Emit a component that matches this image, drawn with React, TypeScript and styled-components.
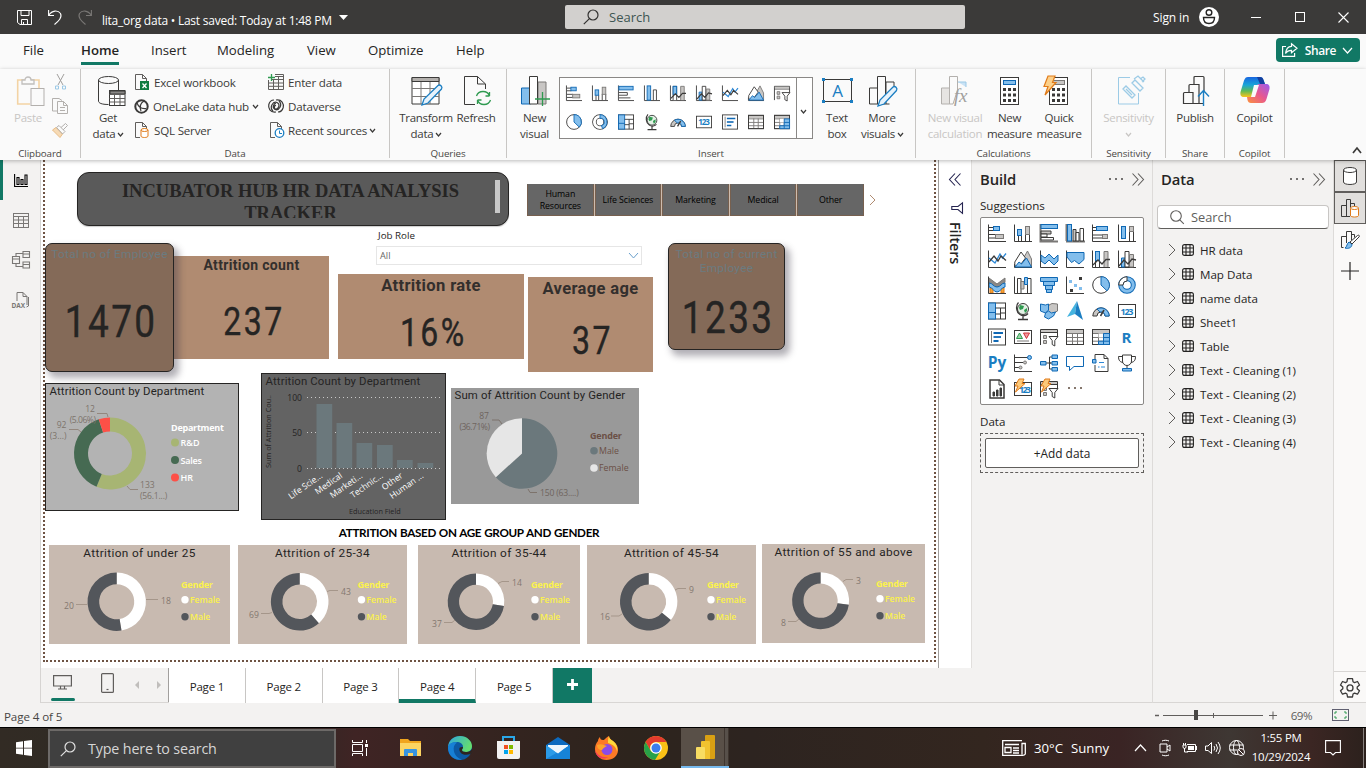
import React from "react";
import styled, { createGlobalStyle, css } from "styled-components";

const GlobalStyle = createGlobalStyle`
  * { box-sizing: border-box; }
  html, body { margin: 0; padding: 0; }
  body {
    width: 1366px; height: 768px; overflow: hidden;
    font-family: "Open Sans", "Noto Sans", sans-serif;
    font-size: 11.4px; color: #3b3a39; background: #f3f2f1;
  }
  svg { display: block; flex: none; overflow: visible; }
`;

const DARK = "#3b3a39";
const GREY = "#7a7876";
const GFILL = "#c8c6c4";
const BLUE = "#0f68b4";
const BFILL = "#83beec";
const TEAL = "#117865";
const GREEN = "#2f9a50";
const ORANGE = "#e07b1a";

/* ---------- visual type icons ---------- */

const Axes = () => <path d="M.5 .5V17.5H18" stroke={DARK} />;
const Table = ({ head = GFILL }: { head?: string }) => (
  <>
    <rect x=".5" y="1.5" width="17" height="15" fill="#fff" stroke={DARK} />
    <path d="M1 2h16v3H1z" fill={head} />
    <path d="M1 5.5h16M1 9.5h16M1 13.2h16M6.5 5v11M11.5 5v11" stroke={GREY} />
    <rect x=".5" y="1.5" width="17" height="15" stroke={DARK} />
  </>
);
const Bolt = () => <path d="M5 -1h5L8 3.5h3L1.5 12 4 6H1z" fill="#fcc97a" stroke={ORANGE} />;
const Filter = () => (
  <>
    <path d="M.5 17V1.5h17V8M.5 4.5h17" stroke={DARK} />
    <path d="M1 2h16v2H1z" fill={GFILL} />
    <path d="M3.5 7.5h3v3h-3zM3.5 12.5h3v3h-3z" fill={GFILL} stroke={GREY} />
    <path d="M9 8.5h9l-3.2 4V18l-2.6-1.5v-4z" fill="#fff" stroke={DARK} />
  </>
);

const drawings: Record<string, React.ReactNode> = {
  stackedBar: (<><Axes /><path d="M1 3.5h5M1 6.5h5M1 10.5h7M1 14h7" stroke={DARK} /><rect x="5.500" y="2.500" width="6" height="4" fill={BFILL} stroke={BLUE} /><rect x="7.500" y="10.500" width="8" height="4" fill={GFILL} stroke={GREY} /></>),
  stackedCol: (<><Axes /><path d="M4.500 17v-6M7.500 17v-6M11.500 17v-7M15.500 17v-7" stroke={DARK} /><rect x="3.500" y="5.500" width="4" height="6" fill={BFILL} stroke={BLUE} /><rect x="11.500" y="2.500" width="4" height="8" fill={GFILL} stroke={GREY} /></>),
  bar: (<><Axes /><rect x="1" y="1.500" width="16" height="4" fill={BFILL} stroke={BLUE} /><path d="M1 8.500h9.500v3H1M1 14.500h13" stroke={DARK} /></>),
  col: (<><Axes /><rect x="3.500" y="1" width="4" height="16" fill={BFILL} stroke={BLUE} /><path d="M10.500 17V5.500h3.500V17" stroke={DARK} /></>),
  clusterBar: (<><path d="M-.5 17.500H18M.5 0v17" stroke={GREY} strokeWidth="2" /><rect x="1" y=".500" width="16.500" height="4" fill={BFILL} stroke={BLUE} /><path d="M1 7h10v3H1z" fill={GFILL} stroke={DARK} /><path d="M1 10h6v3H1zM1 13.500h12.500V16H1z" fill="#fff" stroke={DARK} /></>),
  clusterCol: (<><path d="M0 17.500H19M.5 0v17" stroke={GREY} strokeWidth="2" /><rect x="1.500" y=".500" width="4" height="16.500" fill={BFILL} stroke={BLUE} /><path d="M7 5.500h3V17H7z" fill={GFILL} stroke={DARK} /><path d="M10 8.500h3V17h-3zM14 4.500h3.500V17H14z" fill="#fff" stroke={DARK} /></>),
  fullBar: (<><Axes /><path d="M1 3.500h4M1 6.500h4M1 11h10M1 14h10" stroke={DARK} /><rect x="4.500" y="2.500" width="11" height="4" fill={BFILL} stroke={BLUE} /><rect x="10.500" y="10.500" width="5" height="4" fill={GFILL} stroke={GREY} /></>),
  fullCol: (<><Axes /><rect x="3.500" y="2.500" width="4" height="12" fill={BFILL} stroke={BLUE} /><path d="M11.500 17V8M15.500 17V8" stroke={DARK} /><rect x="11.500" y="2.500" width="4" height="5" fill={GFILL} stroke={GREY} /></>),
  line: (<><Axes /><path d="M1 8l6 5 5-9 2.500 4L18 3.500" stroke="#2b88d8" strokeWidth="1.300" /><path d="M1 12l5-6 4 5 3-5 5 4.500" stroke={DARK} strokeWidth="1.300" /></>),
  area: (<><path d="M.5 14V17.500H18" stroke={DARK} /><path d="M9 9l4.500-8L17.500 9v8z" fill={GFILL} stroke={GREY} /><path d="M.8 12L7 2l4.500 6-6 8H.8z" fill="#fff" stroke={DARK} /><path d="M1 17l4-5 2.500 2L12.500 8l5 9z" fill={BFILL} stroke={BLUE} /></>),
  stackedArea: (<><path d="M.5 .500V17.500H18" stroke={DARK} /><path d="M1 5l4 3 4-4 5 5 4-4v6l-4 4-5-5-4 4-4-3z" fill={BFILL} stroke={BLUE} /></>),
  fullArea: (<><Axes /><path d="M1 2.500h17v7l-5 4.500-4.500-3.500-3 2L1 7z" fill={BFILL} stroke={BLUE} /></>),
  lineStacked: (<><Axes /><path d="M3.500 17V1.500h4V17" fill="#fff" stroke={DARK} /><rect x="3.500" y="1.500" width="4" height="9" fill={BFILL} stroke={BLUE} /><path d="M12 17V1.500h4V17" fill={GFILL} stroke={GREY} /><path d="M1 15l5-5 4 4 4-4.500h4" stroke={DARK} strokeWidth="1.300" /></>),
  lineCluster: (<><Axes /><path d="M3.500 8h3.500v9H3.500z" fill={BFILL} stroke={BLUE} /><path d="M7 1.500h4V17H7z" fill="#fff" stroke={DARK} /><path d="M11.500 4.500h4V17h-4z" fill={GFILL} stroke={GREY} /><path d="M1 16l5-6 4 4 4-5 4 1" stroke={DARK} strokeWidth="1.300" /></>),
  ribbon: (<><path d="M2 12h3v5H2zM13 12h3v5h-3z" fill="#f4a536" stroke={ORANGE} /><path d="M1 2l8 6 8-6v4.500l-8 5-8-5z" fill="#8a8886" stroke={GREY} /><path d="M1 7c4 0 4 4 8 4s4-4 8-4v4c-4 0-4 5-8 5s-4-5-8-5z" fill={BFILL} stroke={BLUE} /><Axes /></>),
  waterfall: (<><Axes /><path d="M3.500 17V2.500H7V17M13.500 17V2.500h3.500V17" stroke={DARK} /><path d="M7 5.500h3V13H7z" fill={GFILL} stroke={GREY} /><path d="M10.500 1.500h3v7h-3z" fill={BFILL} stroke={BLUE} /></>),
  funnel: (<g fill={BFILL} stroke={BLUE}><path d="M.5 1.500h17v4H.5zM3.500 5.500h11v4h-11zM5.500 9.500h7v4h-7zM6.500 13.500h5v3h-5z" /></g>),
  scatter: (<><Axes /><path d="M13 1h3v3h-3zM4 13h3v3H4z" fill={DARK} /><path d="M3 4h3v3H3zM8 8h3v3H8zM13 11h3v3h-3z" fill={BFILL} /></>),
  pie: (<><circle cx="9" cy="9" r="8.300" fill="#fff" stroke={DARK} /><path d="M9 .700V9l6 5.800A8.300 8.300 0 0 0 9 .700z" fill={BFILL} stroke={BLUE} /></>),
  donut: (<><circle cx="9" cy="9" r="6.300" stroke={BLUE} strokeWidth="5" /><circle cx="9" cy="9" r="6.300" stroke={BFILL} strokeWidth="3" /><path d="M9 .700A8.300 8.300 0 0 0 .700 9H5a4 4 0 0 1 4-4z" fill="#fff" stroke={DARK} /></>),
  donutLight: (<><circle cx="9" cy="9" r="6.300" stroke={DARK} strokeWidth="5" /><circle cx="9" cy="9" r="6.300" stroke="#fff" strokeWidth="3.200" /><path d="M9 .700A8.300 8.300 0 0 1 12 16.500L10.500 13A4 4 0 0 0 9 5z" fill={BFILL} stroke={BLUE} /></>),
  treemap: (<><rect x=".500" y="1" width="17" height="16" fill="#fff" stroke={DARK} /><rect x=".500" y="1" width="7" height="16" fill={BFILL} stroke={BLUE} /><path d="M.5 10.500h7" stroke={BLUE} /><path d="M7.500 6h10M12.500 6v11M12.500 11h5M7.500 12h5" stroke={DARK} /></>),
  map: (<><circle cx="9" cy="7" r="5.500" fill="#e3f1e5" stroke={DARK} /><path d="M6 3l4 1-1 3-3 1-1-2zM10 8l3-2v3l-2 2z" fill={GREEN} /><path d="M4.500 .500C1.500 3.500 2 10 6 12.500c3 2 6.500 1 8-1M9 14v3M4 17.500h10" stroke={DARK} strokeWidth="1.300" /></>),
  filled: (<><path d="M9 3l3-1.500 5.500.5v7l-4 2-5 1-3-2 2-3z" fill={GFILL} stroke={GREY} /><path d="M.5 2l5 1 3-1v6l-3 3-5-2z" fill={BFILL} stroke={BLUE} /><path d="M5.500 11l3-2 3 2 4-1-2 4-5 3-4-2z" fill={BFILL} stroke={BLUE} /></>),
  azure: (<><path d="M11 -1L1 15l8-3z" fill="#45b4e0" /><path d="M11 -1L17 18l-8-6z" fill="#1b7ec2" /></>),
  gauge: (<><path d="M.8 14A8.200 8.200 0 0 1 17.200 14H13a4 4 0 0 0-8 0z" fill={GFILL} stroke={DARK} /><path d="M5 7a8.200 8.200 0 0 1 12.200 7H13a4 4 0 0 0-5-4z" fill={BFILL} stroke={BLUE} /><path d="M8.500 14L12 8" stroke={DARK} strokeWidth="1.500" /></>),
  card: (<><rect x=".500" y="2.500" width="17" height="13" fill="#fff" stroke={DARK} /><text x="9" y="12.600" fontSize="9" fontWeight="700" fill="#1b7ec2" textAnchor="middle" fontFamily="Open Sans" textLength="13">123</text></>),
  multiRow: (<><rect x=".500" y="1" width="17" height="16" fill="#fff" stroke={DARK} /><path d="M3.500 3v12" stroke={GREY} /><path d="M5.500 5H15M5.500 13h5" stroke={BLUE} strokeWidth="1.800" /><path d="M5.500 9H13" stroke={BLUE} strokeWidth="1.800" /></>),
  kpi: (<><rect x=".500" y="2.500" width="17" height="13" fill="#fff" stroke={DARK} /><path d="M5.500 5l3 5.500h-6z" fill="#9fd3a9" stroke={GREEN} /><path d="M12.500 10.500l3-5.500h-6z" fill="#f19ba1" stroke="#d13438" /><path d="M3 13h12" stroke={GREY} /></>),
  slicer: <Filter />,
  table: <Table />,
  matrix: (<><Table /><path d="M6.500 5.500h5v4h-5z" fill="#fff" /><path d="M11.500 5.500h6v11h-11v-3.300h5z" fill={BFILL} /><path d="M11.500 5.500h6v11h-11v-3.300h5zM11.500 9.500h6M11.500 13.200h6M11.500 13v3.500" stroke={BLUE} /></>),
  r: (<text x="8.500" y="14.500" fontSize="15" fontWeight="700" fill="#1b7ec2" textAnchor="middle">R</text>),
  py: (<text x="9" y="14" fontSize="15.500" fontWeight="700" fill="#1b7ec2" textAnchor="middle">Py</text>),
  influencers: (<><Axes /><path d="M1 3.500h13M1 8.500h8M1 13.500h4" stroke={DARK} /><circle cx="15.500" cy="3.500" r="2" fill={BFILL} stroke={BLUE} /><circle cx="11" cy="8.500" r="1.500" fill={GFILL} stroke={GREY} /><circle cx="6.500" cy="13.500" r="1.500" fill={GFILL} stroke={GREY} /></>),
  tree: (<><path d="M6 9h5M9.500 3v12M9.500 3H12M9.500 15H12M9.500 9H12" stroke={DARK} /><path d="M.5 7.500H6v3.500H.5zM12 1h5.500v3.500H12zM12 7.500h5.500V11H12zM12 13.500h5.500V17H12z" fill={BFILL} stroke={BLUE} /></>),
  qna: <path d="M.5 2.500h17v10H8L3.500 16.500v-4h-3z" fill="#fff" stroke={BLUE} />,
  narrative: (<><path d="M3 5V.500h9L16 4.500v13H3V11" fill="#fff" stroke={DARK} /><path d="M12 .500v4h4" stroke={DARK} /><path d="M0.500 5.500h3.500v3.500H.5z" fill={BFILL} stroke={BLUE} /><path d="M7 8.500h5M6 13h1.500M9 13h4" stroke="#2b88d8" /></>),
  goals: (<><path d="M4.500 1h9v6a4.500 4.500 0 0 1-9 0z" fill="#fff" stroke={DARK} /><path d="M4.500 2.500h-4c0 4 1.500 5.500 4.500 6M13.500 2.500h4c0 4-1.500 5.500-4.500 6M9 11.500V15" stroke={DARK} /><path d="M4.500 17h9v-2.500h-9z" fill={BFILL} stroke={BLUE} /></>),
  paginated: (<><path d="M2 0h9.500L16 4.500V18H2z" fill="#fff" stroke={DARK} strokeWidth="1.500" /><path d="M11 0v5h5" stroke={DARK} /><path d="M5 12h1.500v4H5zM8.500 10H10v6H8.500zM12 8h1.500v8H12z" fill={DARK} stroke={DARK} /></>),
  powerCard: (<><rect x=".500" y="2.500" width="17" height="13" fill="#fff" stroke={DARK} /><text x="11" y="13" fontSize="9" fontWeight="700" fill="#1b7ec2" textAnchor="middle" textLength="12">123</text><Bolt /></>),
  powerFilter: (<><Filter /><Bolt /></>),
  more: (<g fill="#5c4a3c"><circle cx="3" cy="8" r="1" /><circle cx="9" cy="8" r="1" /><circle cx="15" cy="8" r="1" /></g>),
};

const VisualIcon = ({ name, size = 18 }: { name: string; size?: number }) => (
  <svg width={size} height={size} viewBox="0 0 18 18" fill="none">{drawings[name]}</svg>
);

const Chevron = ({ w = 5, h = 3, dir = "down", color = DARK, sw = 1.2 }: { w?: number; h?: number; dir?: "down" | "right" | "up"; color?: string; sw?: number }) => (
  <svg width={w} height={h} viewBox={`0 0 ${w} ${h}`} fill="none" stroke={color} strokeWidth={sw}>
    {dir === "down" && <path d={`M0 0L${w / 2} ${h}L${w} 0`} />}
    {dir === "up" && <path d={`M0 ${h}L${w / 2} 0L${w} ${h}`} />}
    {dir === "right" && <path d={`M0 0L${w} ${h / 2}L0 ${h}`} />}
  </svg>
);

/* ---------- shell ---------- */

const Window = styled.div`
  width: 1366px; height: 768px; display: flex; flex-direction: column; overflow: hidden;
`;

const TitleBar = styled.header`
  height: 34px; flex: none; background: #3b3a39; color: #fff; display: flex; align-items: center;
  padding-left: 17px;
`;
const QuickIcons = styled.div`display: flex; align-items: center; gap: 16px; width: 85px;`;
const DocTitle = styled.div`
  display: flex; align-items: center; gap: 8px; font-size: 12px; letter-spacing: -0.24px; width: 463px; padding-top: 6px; white-space: nowrap;
`;
const TopSearch = styled.div`
  width: 400px; height: 24px; background: #d2d0ce; border-radius: 2px; display: flex; align-items: center;
  gap: 10px; padding-left: 18px; font-size: 13px; color: #3d5552;
`;
const WindowControls = styled.div`
  margin-left: 188px; display: flex; align-items: center; font-size: 12px;
  letter-spacing: -0.1px; white-space: nowrap;
`;
const Control = styled.div<{ $w: number }>`width: ${(p) => p.$w}px; display: flex; justify-content: center;`;

const MenuBar = styled.nav`
  height: 35px; flex: none; background: #fafafa; display: flex; padding-left: 23px;
`;
const MenuItem = styled.div<{ $w: number; $active?: boolean }>`
  width: ${(p) => p.$w}px; font-size: 13.2px; line-height: 33px; color: #252423; white-space: nowrap;
  ${(p) => p.$active && css`font-weight: 600; span { display: inline-block; height: 31px; line-height: 33px; border-bottom: 3px solid ${TEAL}; }`}
`;
const ShareButton = styled.button`
  margin: 4px 6px 0 auto; width: 84px; height: 24px; border: 0; border-radius: 4px; background: ${TEAL}; color: #fff;
  display: flex; align-items: center; justify-content: center; gap: 7px; font: 600 12px "Open Sans"; letter-spacing: -0.4px; padding: 0 2px 0 0;
`;

const Ribbon = styled.div`
  height: 91px; flex: none; background: #fafafa; display: flex; position: relative; z-index: 2;
  box-shadow: 0 1px 4px rgba(0, 0, 0, 0.28);
`;
const Group = styled.section<{ $w: number }>`
  width: ${(p) => p.$w}px; height: 89px; border-right: 1px solid #c8c6c4;
  display: flex; flex-direction: column; flex: none;
`;
const GroupBody = styled.div<{ $pl?: number }>`
  display: flex; height: 79px; padding: 1px 0 0 ${(p) => p.$pl ?? 0}px; flex: none;
`;
const GroupLabel = styled.div`
  text-align: center; font-size: 9.8px; line-height: 11px; letter-spacing: -0.1px; color: #484644;
`;
const BigButton = styled.div<{ $w: number; $off?: boolean }>`
  width: ${(p) => p.$w}px; flex: none; display: flex; flex-direction: column; align-items: center;
  color: ${(p) => (p.$off ? "#c8c6c4" : "#3b3a39")}; white-space: nowrap;
  font-size: 11.5px; letter-spacing: -0.28px; line-height: 16px; text-align: center;
`;
const IconSlot = styled.div`height: 40px; padding-top: 6px; display: flex; justify-content: center;`;
const Line = styled.div`display: flex; align-items: center; justify-content: center; gap: 3px; min-height: 16px;`;
const Stack = styled.div<{ $w: number }>`
  width: ${(p) => p.$w}px; flex: none; display: flex; flex-direction: column;
`;
const SmallButton = styled.div`
  height: 24px; display: flex; align-items: center; gap: 5px; white-space: nowrap; font-size: 11.6px; letter-spacing: -0.2px; color: #3b3a39;
`;

const Gallery = styled.div`
  width: 254px; height: 62px; margin-top: 7px; border: 1px solid #8a8886; background: #fff; display: flex; flex: none;
`;
const GalleryGrid = styled.div`
  width: 237px; border-right: 1px solid #8a8886; padding: 0 0 0 1px; display: grid; grid-template-columns: repeat(9, 26px); grid-template-rows: 29px 29px;
  justify-items: center; align-items: center;
`;
const GalleryMore = styled.div`flex: 1; display: flex; align-items: center; justify-content: center; padding: 6px 2px 0 0;`;
const Collapse = styled.div`margin: auto 5px 7px auto;`;

const Body = styled.div`height: 543px; flex: none; display: flex;`;

const ViewRail = styled.aside`
  width: 41px; background: #f3f2f1; border-right: 1px solid #d6d4d2; display: flex; flex-direction: column;
`;
const RailItem = styled.div<{ $active?: boolean }>`
  height: 40px; display: flex; align-items: center; justify-content: center;
  border-left: 3px solid ${(p) => (p.$active ? TEAL : "transparent")}; padding-right: 2px;
`;

const Center = styled.main`width: 931px; display: flex; flex-direction: column;`;
const Stage = styled.div`height: 508px; display: flex; background: #fff;`;
const Report = styled.div`
  width: 898px; height: 508px; position: relative; overflow: hidden; background: #fff; border-right: 1px solid #a19f9d;
`;
const ReportPage = styled.div`
  width: 893px; height: 514px; margin: -12px 0 0 2px; border: 2px dotted #6e5343;
`;
const FilterPane = styled.div`
  flex: 1; display: flex; flex-direction: column; align-items: center; padding-top: 13px; border-right: 1px solid #e1dfdd; color: #252450;
`;
const VerticalText = styled.div`
  writing-mode: vertical-rl; font-weight: 600; font-size: 14.4px; letter-spacing: -0.1px; color: #252423; margin-top: 8px; line-height: 16px;
`;

/* ---------- report visuals ---------- */

const Visual = styled.section<{ $x: number; $y: number; $w: number; $h: number; $bg?: string; $line?: boolean; $raised?: boolean }>`
  position: absolute; left: ${(p) => p.$x}px; top: ${(p) => p.$y}px; width: ${(p) => p.$w}px; height: ${(p) => p.$h}px;
  background: ${(p) => p.$bg ?? "transparent"};
  ${(p) => p.$line && css`border: 1px solid #252423;`}
  ${(p) => p.$raised && css`border-radius: 7px; box-shadow: 4px 5px 7px 1px rgba(60, 55, 70, 0.4); z-index: 1;`}
`;
const Banner = styled(Visual)`
  border: 1px solid #252423; border-radius: 12px; padding: 7px 8px 7px; display: flex; box-shadow: 0 1px 1px #ccc;
`;
const BannerText = styled.h1`
  margin: 0; flex: 1; height: 38px; overflow: hidden; text-align: center; padding-left: 0;
  font: 700 18.5px/22px "Liberation Serif", serif; color: #252423;
`;
const BannerScroll = styled.div`width: 5px; height: 33px; background: #c8c8c8;`;

const TileSlicer = styled(Visual)`display: flex; align-items: center;`;
const Tiles = styled.div`display: flex; height: 32px; width: 337px; gap: 1px; background: #cdbcae;`;
const Tile = styled.div`
  flex: 1; background: #666; border: 1px solid #77604f; display: flex; align-items: center; justify-content: center; text-align: center;
  color: #000; font-size: 8.8px; line-height: 12px; letter-spacing: -0.1px; border-top-color: #666;
`;
const SlicerLabel = styled.div`font-size: 9.8px; line-height: 12px; color: #252423; padding-left: 2px;`;
const Dropdown = styled.div`
  margin-top: 4px; height: 19px; border: 1px solid #e6e6e6; display: flex; align-items: center; justify-content: space-between;
  padding: 0 3px 0 3px; font-size: 9.2px; color: #666;
`;

const CardVisual = styled(Visual)`
  display: flex; flex-direction: column; align-items: center; overflow: hidden;
`;
const CardTitle = styled.div<{ $bold?: boolean; $size: number }>`
  font-family: Roboto, sans-serif; white-space: nowrap; text-align: center; font-size: ${(p) => p.$size}px;
  ${(p) => (p.$bold ? css`font-weight: 700; color: #332f2d; letter-spacing: 0.35px; line-height: 19px;` : css`color: #6b7b80; letter-spacing: 0.3px; line-height: 14px;`)}
`;
const CardValue = styled.div<{ $size: number; $mt: number }>`
  font-family: Roboto, sans-serif; font-size: ${(p) => p.$size}px; line-height: 1; margin-top: ${(p) => p.$mt}px;
  letter-spacing: 3px; padding-left: 5px; color: #252423; transform: scaleX(0.82); white-space: nowrap; -webkit-text-stroke: 0.4px #252423;
`;

const ChartTitle = styled.div<{ $center?: boolean }>`
  font-family: Roboto, sans-serif; line-height: 14px; color: #252423; white-space: nowrap;
  ${(p) => (p.$center ? css`text-align: center; font-size: 11.8px; letter-spacing: 0.36px; padding-top: 1px;` : css`font-size: 11.4px; letter-spacing: 0.13px; padding-left: 3.500px;`)}
`;
const Plot = styled.svg`position: absolute; left: 0; top: 0; text { font-family: "Open Sans", sans-serif; font-size: 8.6px; }`;
const Heading = styled(Visual)`
  font: 700 11.7px/18px Lato, sans-serif; letter-spacing: -0.33px; word-spacing: 0.4px; color: #000; text-align: center; white-space: nowrap;
`;

const ring = (cx: number, cy: number, R: number, r: number, from: number, to: number) => {
  const pt = (rad: number, t: number) => `${(cx + rad * Math.sin(t * 2 * Math.PI)).toFixed(2)} ${(cy - rad * Math.cos(t * 2 * Math.PI)).toFixed(2)}`;
  const big = to - from > 0.5 ? 1 : 0;
  return r === 0
    ? `M${cx} ${cy}L${pt(R, from)}A${R} ${R} 0 ${big} 1 ${pt(R, to)}Z`
    : `M${pt(R, from)}A${R} ${R} 0 ${big} 1 ${pt(R, to)}L${pt(r, to)}A${r} ${r} 0 ${big} 0 ${pt(r, from)}Z`;
};

type AgeChart = {
  title: string; x: number; y: number; w: number; cx: number; r: number; legend: number;
  female: number; male: number; fPos: [number, number]; mPos: [number, number]; fLine: string; mLine: string;
};
const ageCharts: AgeChart[] = [
  { title: "Attrition of under 25", x: 8, y: 385, w: 181, cx: 67.7, r: 29.2, legend: 132, female: 18, male: 20, fPos: [112, 58.500], mPos: [15, 63.500], fLine: "M97 54.500H109", mLine: "M27 59.500H38" },
  { title: "Attrition of 25-34", x: 197, y: 385, w: 169, cx: 61.7, r: 28.8, legend: 119.5, female: 43, male: 69, fPos: [103, 49.500], mPos: [11, 72.500], fLine: "M89 46.500L92 45.500H100", mLine: "M23 68.500H31L34 67.500" },
  { title: "Attrition of 35-44", x: 377, y: 385, w: 162, cx: 58, r: 28.3, legend: 113, female: 14, male: 37, fPos: [94, 40.500], mPos: [14, 81.500], fLine: "M80 38.500L84 36.500H91", mLine: "M26 77.500H34L37 75" },
  { title: "Attrition of 45-54", x: 546, y: 385, w: 169, cx: 61.700, r: 28.700, legend: 120, female: 9, male: 16, fPos: [102, 47.500], mPos: [13, 74.500], fLine: "M88 45L91 43.500H99", mLine: "M24 71H32L35 69" },
  { title: "Attrition of 55 and above", x: 721, y: 384, w: 163, cx: 58.600, r: 28.500, legend: 114, female: 3, male: 8, fPos: [94, 39.500], mPos: [19, 81.500], fLine: "M81 37.500L84 35.500H91", mLine: "M26 77.500H34L37 75" },
];

const AgeDonut = (c: AgeChart) => {
  const f = c.female / (c.female + c.male);
  return (
    <Visual $x={c.x} $y={c.y} $w={c.w} $h={99} $bg="#c8bab0">
      <ChartTitle $center>{c.title}</ChartTitle>
      <Plot width={c.w} height={99} fill="none">
        <path d={ring(c.cx, 56.700, c.r, c.r * 0.6, 0, f)} fill="#fff" />
        <path d={ring(c.cx, 56.700, c.r, c.r * 0.6, f, 1)} fill="#53565b" />
        <path d={c.fLine} stroke="#a5968a" />
        <path d={c.mLine} stroke="#a5968a" />
        <g fill="#83776f">
          <text x={c.fPos[0]} y={c.fPos[1]}>{c.female}</text>
          <text x={c.mPos[0]} y={c.mPos[1]}>{c.male}</text>
        </g>
        <circle cx={c.legend + 4} cy="54.700" r="3.700" fill="#fff" />
        <circle cx={c.legend + 4} cy="71.800" r="3.700" fill="#53565b" />
        <g fill="#fbf24c">
          <text x={c.legend} y="43" fontWeight="700" style={{ fontSize: 9, letterSpacing: -0.2 }}>Gender</text>
          <text x={c.legend + 9} y="58" fontWeight="600">Female</text>
          <text x={c.legend + 9} y="75" fontWeight="600">Male</text>
        </g>
      </Plot>
    </Visual>
  );
};

const fields = [
  { n: "Life Scie...", x: 55, top: 31 }, { n: "Medical", x: 75, top: 50 }, { n: "Marketi...", x: 95, top: 70 },
  { n: "Technic...", x: 115.5, top: 72 }, { n: "Other", x: 135.5, top: 87 }, { n: "Human ...", x: 156, top: 90 },
];

const ReportCanvas = () => (
  <Report>
    <ReportPage />
    <Banner $x={36} $y={12} $w={432} $h={54} $bg="#5a5a5a">
      <BannerText>INCUBATOR HUB HR DATA ANALYSIS TRACKER</BannerText>
      <BannerScroll />
    </Banner>
    <TileSlicer $x={486} $y={24} $w={355} $h={32}>
      <Tiles>
        <Tile>Human<br />Resources</Tile><Tile>Life Sciences</Tile><Tile>Marketing</Tile><Tile>Medical</Tile><Tile>Other</Tile>
      </Tiles>
      <svg width="18" height="12" fill="none" stroke="#b08b71"><path d="M6 1l5 5-5 5" /></svg>
    </TileSlicer>
    <Visual $x={335} $y={70} $w={266} $h={35}>
      <SlicerLabel>Job Role</SlicerLabel>
      <Dropdown>All<Chevron w={9} h={5} color="#6aa0cc" sw={1} /></Dropdown>
    </Visual>

    <CardVisual $x={4} $y={83} $w={129} $h={129} $bg="#846a58" $line $raised>
      <CardTitle $size={11.8} style={{ marginTop: 3 }}>Total no of Employee</CardTitle>
      <CardValue $size={45} $mt={38}>1470</CardValue>
    </CardVisual>
    <CardVisual $x={133} $y={96} $w={155} $h={103} $bg="#b08b71">
      <CardTitle $bold $size={14}>Attrition count</CardTitle>
      <CardValue $size={39} $mt={28}>237</CardValue>
    </CardVisual>
    <CardVisual $x={297} $y={114} $w={186} $h={85} $bg="#b08b71">
      <CardTitle $bold $size={16.6} style={{ marginTop: 2 }}>Attrition rate</CardTitle>
      <CardValue $size={39} $mt={19}>16%</CardValue>
    </CardVisual>
    <CardVisual $x={487} $y={117} $w={125} $h={95} $bg="#b08b71">
      <CardTitle $bold $size={16.5} style={{ marginTop: 2 }}>Average age</CardTitle>
      <CardValue $size={39} $mt={24}>37</CardValue>
    </CardVisual>
    <CardVisual $x={627} $y={83} $w={117} $h={107} $bg="#846a58" $line $raised>
      <CardTitle $size={11.8} style={{ marginTop: 3 }}>Total no of current<br />Employee</CardTitle>
      <CardValue $size={45} $mt={20}>1233</CardValue>
    </CardVisual>

    <Visual $x={4} $y={223} $w={193.5} $h={128} $bg="#b3b3b3" $line>
      <ChartTitle>Attrition Count by Department</ChartTitle>
      <Plot width={192} height={126} fill="none">
        <path d={ring(64, 69.500, 36, 22, 0, 133 / 237)} fill="#a7b573" />
        <path d={ring(64, 69.500, 36, 22, 133 / 237, 225 / 237)} fill="#466a52" />
        <path d={ring(64, 69.500, 36, 22, 225 / 237, 1)} fill="#fd5047" />
        <path d="M51 29.500H61L62 33M23 45.500H32L35 48M81 102L84 105.500H92" stroke="#93877e" />
        <g fill="#7d736c">
          <text x="49" y="27.500" textAnchor="end">12</text><text x="49.500" y="38.500" textAnchor="end" style={{ letterSpacing: -0.5 }}>(5.06%)</text>
          <text x="20.500" y="43.500" textAnchor="end">92</text><text x="20.500" y="54.500" textAnchor="end">(3...)</text>
          <text x="94" y="103.500">133</text><text x="94" y="114.500" style={{ letterSpacing: -0.2 }}>(56.1...)</text>
        </g>
        <g fill="#fff" fontWeight="600">
          <text x="125" y="47" fontWeight="700" style={{ fontSize: 9, letterSpacing: -0.25 }}>Department</text>
          <text x="134.500" y="62" style={{ fontSize: 9 }}>R&amp;D</text><text x="134.500" y="80" style={{ fontSize: 9, letterSpacing: -0.2 }}>Sales</text><text x="134.500" y="97" style={{ fontSize: 9 }}>HR</text>
        </g>
        <circle cx="129" cy="58.500" r="4" fill="#a7b573" /><circle cx="129" cy="76" r="4" fill="#466a52" /><circle cx="129" cy="93.500" r="4" fill="#fd5047" />
      </Plot>
    </Visual>

    <Visual $x={220} $y={213} $w={184.5} $h={147} $bg="#636363" $line>
      <ChartTitle>Attrition Count by Department</ChartTitle>
      <Plot width={183} height={145} fill="none">
        <path d="M45 23.500H180M45 58.500H180M45 94.500H180" stroke="#c9c9c9" strokeDasharray="1 3" />
        {fields.map((f) => <rect key={f.n} x={f.x - 0.5} y={f.top - 1} width="15.700" height={95 - f.top} fill="#6b787c" />)}
        <g fill="#252423">
          <text x="40" y="26.500" textAnchor="end">100</text><text x="40" y="61.500" textAnchor="end">50</text><text x="40" y="97.500" textAnchor="end">0</text>
          <text transform="translate(9 94) rotate(-90)" style={{ fontSize: 7.3 }}>Sum of Attrition Cou..</text>
          <text x="87" y="140" style={{ fontSize: 7.3 }}>Education Field</text>
        </g>
        <g fill="#fff">
          {fields.map((f) => <text key={f.n} textAnchor="end" transform={`translate(${f.x + 6} 103) rotate(-35)`}>{f.n}</text>)}
        </g>
      </Plot>
    </Visual>

    <Visual $x={410} $y={228} $w={188} $h={116} $bg="#999">
      <ChartTitle>Sum of Attrition Count by Gender</ChartTitle>
      <Plot width={188} height={116} fill="none">
        <path d={ring(71, 65.500, 35.300, 0, 0, 150 / 237)} fill="#6b787c" />
        <path d={ring(71, 65.500, 35.300, 0, 150 / 237, 1)} fill="#e6e6e6" />
        <path d="M41 32H48L51 36M77 101L79 104.500H86" stroke="#7d736c" />
        <g fill="#6f655f">
          <text x="38" y="30.500" textAnchor="end">87</text><text x="38.500" y="41.500" textAnchor="end" style={{ letterSpacing: -0.5 }}>(36.71%)</text>
          <text x="89" y="108" style={{ letterSpacing: -0.2 }}>150 (63....)</text>
        </g>
        <g fill="#6b5046">
          <text x="139" y="51" fontWeight="700" style={{ fontSize: 9, letterSpacing: -0.2 }}>Gender</text><text x="148" y="66" style={{ fontSize: 8.8 }}>Male</text><text x="148" y="83" style={{ fontSize: 8.8 }}>Female</text>
        </g>
        <circle cx="143" cy="62.800" r="3.800" fill="#6b787c" /><circle cx="143" cy="80" r="3.800" fill="#e6e6e6" />
      </Plot>
    </Visual>

    <Heading $x={289} $y={363} $w={278} $h={18}>ATTRITION BASED ON AGE GROUP AND GENDER</Heading>
    {ageCharts.map((c) => <AgeDonut key={c.title} {...c} />)}
  </Report>
);

/* ---------- page tabs ---------- */

const PageBar = styled.div`height: 35px; background: #f3f2f1; display: flex; border-bottom: 1px solid #d8d6d4;`;
const DeviceTools = styled.div`width: 128px; display: flex; align-items: center; border-right: 1px solid #a19f9d; flex: none;`;
const Device = styled.div<{ $w: number; $on?: boolean }>`
  width: ${(p) => p.$w}px; height: 32px; display: flex; flex-direction: column; align-items: center; justify-content: ${(p) => (p.$on ? "space-between" : "center")};
  padding: ${(p) => (p.$on ? "6px 0 0" : "0 0 4px")};
  ${(p) => p.$on && css`&::after { content: ""; width: 24px; height: 3px; border-radius: 2px; background: ${TEAL}; }`}
`;
const PageTab = styled.div<{ $on?: boolean }>`
  width: 76.8px; height: 35px; background: #fff; border-right: 1px solid #c8c6c4; text-align: center; line-height: 38px; font-size: 11.5px;
  letter-spacing: -0.2px; color: #252423; flex: none; position: relative; z-index: 1;
  ${(p) => p.$on && css`border-bottom: 4px solid ${TEAL};`}
`;
const AddPage = styled.div`width: 39px; height: 35px; background: ${TEAL}; display: flex; align-items: center; justify-content: center; padding-bottom: 2px;`;

/* ---------- right panes ---------- */

const Pane = styled.aside`
  width: 181px; background: #f3f2f1; border-right: 1px solid #dddbd9; border-bottom: 1px solid #d8d6d4; padding: 9px 8px 0 8px; flex: none;
`;
const PaneHead = styled.div`
  display: flex; align-items: center; height: 20px; font-size: 14.8px; font-weight: 600; color: #252423; letter-spacing: -0.1px;
  span { flex: 1; }
`;
const PaneLabel = styled.div<{ $mt: number }>`margin-top: ${(p) => p.$mt}px; font-size: 11.6px; line-height: 16px; color: #252423;`;
const IconGrid = styled.div`
  margin-top: 3px; width: 164px; height: 188px; border: 1px solid #8a8886; border-radius: 2px; background: #fff; padding: 2px 3px;
  display: grid; grid-template-columns: repeat(6, 26px); grid-auto-rows: 26px; place-items: center;
`;
const DropZone = styled.div`margin-top: 3px; width: 164px; height: 40px; border: 1px dashed #605e5c; padding: 4px;`;
const AddData = styled.div`
  height: 30px; border: 1px solid #605e5c; border-radius: 2px; background: #fff; text-align: center; line-height: 29px; font-size: 11.9px; color: #252423;
`;
const FieldSearch = styled.div`
  margin: 16px 0 0 -4px; width: 172px; height: 24px; border: 1px solid #c8c6c4; border-bottom-color: #605e5c; border-radius: 4px; background: #fff;
  display: flex; align-items: center; gap: 7px; padding-left: 12px; font-size: 12.8px; color: #605e5c;
`;
const FieldList = styled.div`margin-top: 9px;`;
const FieldRow = styled.div`
  height: 24px; display: flex; align-items: center; padding-left: 8px; font-size: 11.6px; white-space: nowrap; color: #252423;
  svg + svg { margin: 0 6px 0 7px; }
`;
const SideRail = styled.aside`flex: 1; background: #faf9f8; display: flex; flex-direction: column; align-items: center; border-bottom: 1px solid #d8d6d4;`;
const SideButton = styled.div<{ $on?: boolean }>`
  width: 32px; height: 32px; display: flex; align-items: center; justify-content: center;
  ${(p) => p.$on && css`background: #e1dfdd; border: 1px solid #605e5c;`}
`;
const SettingsButton = styled.div`margin-top: auto; width: 100%; height: 31px; border-top: 1px solid #d8d6d4; display: flex; align-items: center; justify-content: center; padding-top: 2px;`;

const StatusBar = styled.footer`
  height: 24px; flex: none; background: #f3f2f1; display: flex; align-items: center; justify-content: space-between; padding: 3px 17px 0 4px; font-size: 11.6px; letter-spacing: -0.1px; color: #484644;
`;
const Zoom = styled.div`display: flex; align-items: center; gap: 6px; margin-top: -3px; letter-spacing: -0.5px; color: #605e5c;`;

/* ---------- taskbar ---------- */

const Taskbar = styled.footer`
  height: 41px; flex: none; border-top: 1px solid #000; display: flex; color: #fff;
  background: linear-gradient(90deg, #322b24 0, #2c2a25 20%, #3f2424 26%, #33241f 38%, #2d241d 46%, #2d2420 55%, #33261f 72%, #3a2424 82%, #3e3733 90%, #3b2623 96%, #2c211d 100%);
`;
const Start = styled.div`width: 48px; display: flex; align-items: center; justify-content: center;`;
const TaskSearch = styled.div`
  width: 288px; height: 39px; margin-top: 1px; background: #404040; border: 2px solid #6d6a68; display: flex; align-items: center; gap: 12px; padding-left: 10px;
  font-size: 14.3px; letter-spacing: -0.15px; color: #d6d6d6;
`;
const TaskApp = styled.div<{ $on?: boolean }>`
  width: 49px; display: flex; align-items: center; justify-content: center;
  ${(p) => p.$on && css`width: 48px; margin-left: 1px; background: linear-gradient(90deg, #595048 0 43px, #3e352f 43px 44px, #57504a 44px 47px, #3e352f 47px); border-bottom: 2px solid #76b9ed;`}
`;
const TaskView = styled(TaskApp)`width: 50px; padding-right: 2px;`;
const Tray = styled.div`margin-left: auto; display: flex; align-items: center;`;
const Weather = styled.div`width: 125px; display: flex; align-items: center; gap: 8px; font-size: 13.2px; white-space: nowrap;`;
const TrayIcon = styled.div`width: 24px; display: flex; justify-content: center;`;
const Clock = styled.div`width: 64px; text-align: center; font-size: 11.4px; line-height: 18.500px; letter-spacing: -0.2px; margin-top: -1px;`;

const Magnifier = ({ size, color, sw = 1.2 }: { size: number; color: string; sw?: number }) => (
  <svg width={size} height={size} viewBox="0 0 16 16" fill="none" stroke={color} strokeWidth={sw}><circle cx="10" cy="6" r="5" /><path d="M6.400 9.600L.8 15.200" /></svg>
);
const DoubleChevron = ({ left }: { left?: boolean }) => (
  <svg width="12" height="13" viewBox="0 0 12 13" fill="none" stroke={left ? "#252450" : "#605e5c"} strokeWidth="1.1">
    {left ? <path d="M6 .500l-5.500 6 5.500 6M11.500 .500l-5.500 6 5.500 6" /> : <path d="M.500 .500l5.500 6-5.500 6M6 .500l5.500 6-5.500 6" />}
  </svg>
);
const Dots = () => (
  <svg width="16" height="4" style={{ marginRight: 8 }}><g fill="#484644"><circle cx="2" cy="2" r="1" /><circle cx="8" cy="2" r="1" /><circle cx="14" cy="2" r="1" /></g></svg>
);
const Doc = ({ children }: { children: React.ReactNode }) => (
  <svg width="15" height="16" viewBox="0 0 15 16" fill="none"><path d="M5 15.500H.5V.500h7L11.500 4.500V7M7.500 .500v4h4" stroke="#605e5c" />{children}</svg>
);
const Calculator = ({ quick }: { quick?: boolean }) => (
  <svg width={quick ? 26 : 19} height="31" fill="none" style={quick ? { marginRight: 6 } : undefined}>
    <g transform={quick ? "translate(6 0)" : undefined}>
      <rect x=".500" y="1.500" width="18" height="27" fill="#fff" stroke={DARK} />
      <rect x="3.500" y="4.500" width="12" height="4" fill={quick ? GFILL : BFILL} stroke={quick ? GREY : BLUE} />
      <path d="M3 12h3v3H3zM8 12h3v3H8zM13 12h3v3h-3zM3 17.500h3v3H3zM8 17.500h3v3H8zM13 17.500h3v3h-3zM3 23h3v3H3zM8 23h3v3H8zM13 23h3v3h-3z" fill={DARK} />
    </g>
    {quick && <path d="M5 0h7L9.500 6.500H13L2 19l3-8.500H1z" fill="#fcd08a" stroke={ORANGE} strokeWidth="1.200" />}
  </svg>
);

const galleryIcons = ["stackedBar", "stackedCol", "bar", "col", "lineStacked", "lineCluster", "line", "area", "slicer", "pie", "donutLight", "treemap", "map", "gauge", "card", "multiRow", "table", "matrix"];
const buildIcons = [
  "stackedBar", "stackedCol", "clusterBar", "clusterCol", "fullBar", "fullCol", "line", "area", "stackedArea", "fullArea", "lineStacked", "lineCluster",
  "ribbon", "waterfall", "funnel", "scatter", "pie", "donut", "treemap", "map", "filled", "azure", "gauge", "card",
  "multiRow", "kpi", "slicer", "table", "matrix", "r", "py", "influencers", "tree", "qna", "narrative", "goals", "paginated", "powerCard", "powerFilter", "more",
];
const tables = ["HR data", "Map Data", "name data", "Sheet1", "Table", "Text - Cleaning (1)", "Text - Cleaning (2)", "Text - Cleaning (3)", "Text - Cleaning (4)"];

const RibbonBar = () => (
  <Ribbon>
    <Group $w={81}>
      <GroupBody $pl={1}>
        <BigButton $w={54} $off>
          <IconSlot><svg width="28" height="31" fill="none" style={{ marginLeft: 6 }}><path d="M13 28H.7V4H22v8" stroke="#f3d3a4" strokeWidth="1.600" /><path d="M5 8V4h3c0-4 6-4 6 0h3v4z" fill="#fafafa" stroke="#c0bebc" strokeWidth="1.300" /><rect x="14" y="12.500" width="13" height="17" fill="#fafafa" stroke="#b3b0ad" /></svg></IconSlot>
          <Line>Paste</Line>
        </BigButton>
        <Stack $w={20} style={{ marginLeft: -3 }}>
          <SmallButton style={{ paddingLeft: 3 }}><svg width="11" height="16" fill="none" stroke="#a19f9d"><path d="M2 0l6 11M9 0L3 11" /><path d="M.500 12h3v3h-3zM7.500 12h3v3h-3z" stroke="#9cc9e6" /></svg></SmallButton>
          <SmallButton><svg width="16" height="16" fill="none" stroke="#b3b0ad"><path d="M5 13H.5V.500H7l3 2" /><path d="M5.500 3.500h6l4 4v8h-10zM11.500 3.500v4h4M8 9.500h5M8 12.500h5" /></svg></SmallButton>
          <SmallButton><svg width="16" height="15" fill="none" stroke="#b3b0ad"><path d="M.500 7L4 4.500 10.500 11 8 14.500z" stroke="#e8bd87" fill="#f6dab5" /><path d="M4.500 4.500L7 2.500l6 6-2.500 2.500zM9 4.500L13.500.500 15.500 2.500 11 7" /></svg></SmallButton>
        </Stack>
      </GroupBody>
      <GroupLabel>Clipboard</GroupLabel>
    </Group>
    <Group $w={309}>
      <GroupBody $pl={6}>
        <BigButton $w={42}>
          <IconSlot><svg width="28" height="31" fill="none" stroke={DARK} style={{ marginLeft: 7 }}><ellipse cx="10.500" cy="4" rx="10" ry="3.500" /><path d="M.500 4v21c0 2 3 3.500 10 3.500M20.500 4v10" /><rect x="11.500" y="14.500" width="15.500" height="15" fill="#fff" /><path d="M12 15h15v3H12z" fill="#8a8886" /><path d="M11.500 18.500H27M11.500 22.500H27M11.500 26H27M16.500 18v11M22 18v11" stroke="#605e5c" /></svg></IconSlot>
          <Line>Get</Line><Line>data<Chevron /></Line>
        </BigButton>
        <Stack $w={133} style={{ marginLeft: 6 }}>
          <SmallButton style={{ gap: 4 }}><Doc><path d="M5 7h9v9H5z" fill="#107c41" /><path d="M7.500 9.500l4 4.500M11.500 9.500l-4 4.500" stroke="#fff" strokeWidth="1.300" /></Doc>Excel workbook</SmallButton>
          <SmallButton style={{ gap: 4, marginLeft: -1 }}><svg width="15" height="15" viewBox="0 0 15 15" fill="none" stroke={DARK}><circle cx="7.500" cy="7.500" r="6.200" strokeWidth="2" /><path d="M3 4c1.500 4 5 6 9 5.500M10 2c-3.500 2-4.500 6-3 10" strokeWidth="1.200" /></svg>OneLake data hub<Chevron /></SmallButton>
          <SmallButton style={{ gap: 4 }}><Doc><path d="M6 8v6c0 2 7 2 7 0V8" fill="#fff" stroke={ORANGE} /><ellipse cx="9.500" cy="8" rx="3.500" ry="1.500" fill="#fff" stroke={ORANGE} /></Doc>SQL Server</SmallButton>
        </Stack>
        <Stack $w={118}>
          <SmallButton style={{ gap: 4 }}><svg width="16" height="16" fill="none" stroke="#605e5c"><path d="M4 5.500h11.500M.500 6v9.500h15V.500H7M.500 9h15M.500 12.300h15M5.500 6v9.500M10.500 2v13.500M7 2.500h8.500" /><path d="M3.500 0v7M0 3.500h7" stroke={GREEN} strokeWidth="1.300" /></svg>Enter data</SmallButton>
          <SmallButton style={{ gap: 4 }}><svg width="16" height="14" fill="none" stroke={DARK} strokeWidth="1.200"><path d="M8 13C2 14 0 9 .8 5.500 1.500 3 3.500 1 6 1M8 1c6-1 8 4 7.200 7.500C14.500 11 12.500 13 10 13" /><path d="M5 12C1 8 5 2 9 3.500c4 2 1 7-1.500 6.500-2-.5-1-4 .5-3.500M11 2c4 4 0 10-4 8.500C3 8 7 4 8 4.500" /></svg>Dataverse</SmallButton>
          <SmallButton style={{ paddingLeft: 2, gap: 3 }}><Doc><circle cx="9.500" cy="11" r="4.300" fill="#fff" stroke="#1b7ec2" strokeWidth="1.300" /><path d="M9.500 8.500v3H12" stroke="#1b7ec2" /></Doc>Recent sources<Chevron /></SmallButton>
        </Stack>
      </GroupBody>
      <GroupLabel>Data</GroupLabel>
    </Group>
    <Group $w={117}>
      <GroupBody $pl={8}>
        <BigButton $w={56}>
          <IconSlot><svg width="31" height="31" fill="none" stroke={DARK}><path d="M1 1.500h27V28H1z" fill="#fff" /><path d="M1 1.500h27v4H1z" fill="#b3b0ad" /><path d="M1 12.500h27M1 20.500h27M10 6v22M19 6v22" stroke={GREY} /><path d="M11 29l2-6L27 9.500c2-1.500 5 1 3.500 3.500L17 27z" fill="#e6f2fb" stroke="#1b7ec2" strokeWidth="1.300" /></svg></IconSlot>
          <Line>Transform</Line><Line>data<Chevron /></Line>
        </BigButton>
        <BigButton $w={44}>
          <IconSlot><svg width="28" height="31" fill="none" stroke={DARK} style={{ marginLeft: 4 }}><path d="M11 28.500H.500V.500h13L21.500 8v5M13.500 .500V8h8" /><g stroke={GREEN} strokeWidth="1.300"><path d="M12.500 20c2-6 11-6 13 0v-4M26.500 24c-2 6-11 6-13 0v4M25.500 20h-4M13.500 24h4" /></g></svg></IconSlot>
          <Line>Refresh</Line>
        </BigButton>
      </GroupBody>
      <GroupLabel>Queries</GroupLabel>
    </Group>
    <Group $w={409}>
      <GroupBody $pl={9}>
        <BigButton $w={37} style={{ marginRight: 6 }}>
          <IconSlot><svg width="30" height="31" fill="none" stroke={DARK} style={{ marginLeft: 3 }}><path d="M17 6h8v22h-8z" fill={GFILL} stroke={GREY} /><path d="M.500 12h9v16h-9z" fill={BFILL} stroke={BLUE} /><path d="M8.500 .500h8V28h-8z" fill="#fff" /><path d="M14 23h15M21.500 16v14" stroke={GREEN} strokeWidth="1.300" /></svg></IconSlot>
          <Line>New</Line><Line>visual</Line>
        </BigButton>
        <Gallery>
          <GalleryGrid>{galleryIcons.map((n) => <VisualIcon key={n} name={n} size={16} />)}</GalleryGrid>
          <GalleryMore><Chevron /></GalleryMore>
        </Gallery>
        <BigButton $w={46} style={{ marginLeft: 1 }}>
          <IconSlot><svg width="31" height="28"><rect x="1.500" y="3.500" width="28" height="22" fill="none" stroke={DARK} /><g fill="#1b7ec2"><path d="M0 2h3v3H0zM28 2h3v3h-3zM0 24h3v3H0zM28 24h3v3h-3z" /></g><text x="15.500" y="21" textAnchor="middle" fontSize="17" fill="#1b7ec2">A</text></svg></IconSlot>
          <Line>Text</Line><Line>box</Line>
        </BigButton>
        <BigButton $w={44}>
          <IconSlot><svg width="30" height="31" fill="none" stroke={DARK} style={{ marginLeft: 3 }}><path d="M17 28V6h8v6M9 12H.500v16h20M8.500 28V.500h8V22" /><path d="M9 30l2-6L24 11c2-1.500 5 1 3.500 3.500L15 28z" fill="#e6f2fb" stroke="#1b7ec2" strokeWidth="1.300" /></svg></IconSlot>
          <Line>More</Line><Line>visuals<Chevron /></Line>
        </BigButton>
      </GroupBody>
      <GroupLabel>Insert</GroupLabel>
    </Group>
    <Group $w={176}>
      <GroupBody $pl={7}>
        <BigButton $w={64} $off>
          <IconSlot><svg width="28" height="31" fill="none" stroke="#b3b0ad"><path d="M17 6h8v5" fill="#c9e2f5" stroke="#9cc9e6" /><path d="M.500 12h8v16h-8z" fill="#e6e4e2" /><path d="M8.500 .500h8V14L12 28H8.500z" fill="#fafafa" /><text x="13" y="26" fontFamily="Liberation Serif" fontStyle="italic" fontSize="19" fill="#a19f9d" stroke="none">fx</text></svg></IconSlot>
          <Line>New visual</Line><Line>calculation</Line>
        </BigButton>
        <BigButton $w={45}>
          <IconSlot><Calculator /></IconSlot><Line>New</Line><Line>measure</Line>
        </BigButton>
        <BigButton $w={54}>
          <IconSlot><Calculator quick /></IconSlot><Line>Quick</Line><Line>measure</Line>
        </BigButton>
      </GroupBody>
      <GroupLabel>Calculations</GroupLabel>
    </Group>
    <Group $w={74}>
      <GroupBody>
        <BigButton $w={73} $off>
          <IconSlot><svg width="28" height="31" fill="none" stroke="#9ccbe6" style={{ marginLeft: 6 }}><path d="M12 1.500H.500V28h20V17" /><path d="M5 13l3-3 9 9-3 3zM8 13l6 6M14 7l3-3 8 8-3 3zM16 3l4-3 6 6M22 3l3-2 2 2-3 3" strokeWidth="1.300" /></svg></IconSlot>
          <Line>Sensitivity</Line><Line><Chevron color="#c8c6c4" /></Line>
        </BigButton>
      </GroupBody>
      <GroupLabel>Sensitivity</GroupLabel>
    </Group>
    <Group $w={59}>
      <GroupBody>
        <BigButton $w={58}>
          <IconSlot><svg width="28" height="31" fill="none" stroke={DARK} strokeWidth="1.200" style={{ marginLeft: 4 }}><path d="M.500 27.500V17.500q0-1 1-1h8.500v11zM6 16V9.500q0-1 1-1h9v19h-6M11 8V1.500q0-1 1-1h8q1 0 1 1V15M16 27.500h4" /><path d="M20.500 30V15M15 20.500l5.500-6 5.500 6" stroke="#1b7ec2" strokeWidth="1.400" /></svg></IconSlot>
          <Line>Publish</Line>
        </BigButton>
      </GroupBody>
      <GroupLabel>Share</GroupLabel>
    </Group>
    <Group $w={60}>
      <GroupBody>
        <BigButton $w={59}>
          <IconSlot><svg width="30" height="28">
            <defs>
              <linearGradient id="cpA" x1="0" y1="0" x2="0" y2="1"><stop offset="0" stopColor="#1a66e0" /><stop offset=".4" stopColor="#18a5d8" /><stop offset=".7" stopColor="#5fba56" /><stop offset="1" stopColor="#fcc419" /></linearGradient>
              <linearGradient id="cpB" x1="1" y1="0" x2="0" y2="1"><stop offset="0" stopColor="#9a5cf0" /><stop offset=".5" stopColor="#e8578f" /><stop offset="1" stopColor="#fb923c" /></linearGradient>
            </defs>
            <path d="M8 1h12c2 0 3 1 3.500 3L25 8h-5c-2 0-3 1-3.500 2.500L13 21H4c-3 0-4-2-3.500-5L4 4.500C5 2 6 1 8 1z" fill="url(#cpA)" />
            <path d="M22 27H11c-2 0-3-1-3.500-3L7 21h4c2 0 3-1 3.500-2.500L18 8h8c3 0 4 2 3.500 5L26.500 23c-1 3-2.500 4-4.500 4z" fill="url(#cpB)" />
            <path d="M14 9h5l-4 12h-4z" fill="#fafafa" />
            <path d="M17 1h3c2 0 3 1 3.500 3L25 8h-5z" fill="#14409f" />
          </svg></IconSlot>
          <Line>Copilot</Line>
        </BigButton>
      </GroupBody>
      <GroupLabel>Copilot</GroupLabel>
    </Group>
    <Collapse><Chevron dir="up" w={8} h={5} sw={1.7} /></Collapse>
  </Ribbon>
);

export default function App() {
  return (
    <Window>
      <GlobalStyle />
      <TitleBar>
        <QuickIcons>
          <svg width="15" height="15" fill="none" stroke="#fff"><path d="M.500 .500h14v14H3l-2.500-2zM4 .500v5h8v-5M4.500 14.500v-5h6v5M6.500 12v2" /></svg>
          <svg width="14" height="15" fill="none" stroke="#fff" strokeWidth="1.100"><path d="M.600 0v5.500H6M.800 5.300C4 0 10 0 12.500 3.500c2 4-2 7.500-6 11" /></svg>
          <svg width="14" height="15" fill="none" stroke="#797775" strokeWidth="1.100"><path d="M13.400 0v5.500H8M13.200 5.300C10 0 4 0 1.500 3.500c-2 4 2 7.500 6 11" /></svg>
        </QuickIcons>
        <DocTitle>lita_org data • Last saved: Today at 1:48 PM<svg width="9" height="5" style={{ marginTop: -5, marginLeft: -1 }}><path d="M0 0h9L4.500 5z" fill="#fff" /></svg></DocTitle>
        <TopSearch><Magnifier size={16} color="#323130" />Search</TopSearch>
        <WindowControls>
          Sign in
          <svg width="20" height="20" style={{ marginLeft: 10, marginRight: 15 }}><circle cx="10" cy="10" r="10" fill="#fff" /><g fill="none" stroke="#252423" strokeWidth="1.400"><circle cx="10" cy="5.500" r="2.800" /><path d="M4.500 10.500h11c0 4-2 6-5.500 6s-5.500-2-5.500-6z" /></g></svg>
          <Control $w={44}><svg width="10" height="10" stroke="#fff"><path d="M0 5.500h10" /></svg></Control>
          <Control $w={44}><svg width="10" height="10" stroke="#fff" fill="none"><rect x=".500" y=".500" width="9" height="9" /></svg></Control>
          <Control $w={43}><svg width="11" height="11" stroke="#fff" strokeWidth="1.100"><path d="M.500 .500l10 10M10.500 .500l-10 10" /></svg></Control>
        </WindowControls>
      </TitleBar>
      <MenuBar>
        <MenuItem $w={58}>File</MenuItem>
        <MenuItem $w={70} $active><span>Home</span></MenuItem>
        <MenuItem $w={66}>Insert</MenuItem>
        <MenuItem $w={90}>Modeling</MenuItem>
        <MenuItem $w={61}>View</MenuItem>
        <MenuItem $w={88}>Optimize</MenuItem>
        <MenuItem $w={50}>Help</MenuItem>
        <ShareButton>
          <svg width="16" height="14" fill="none" stroke="#fff" strokeWidth="1.200"><path d="M4 3.500H.600v9.900h12V10" /><path d="M9.500 .800l5.500 4.500-5.500 4.500V7.300C7 7.300 5 8 3.500 10.500 4 6 6 3.500 9.500 3.300z" /></svg>
          <span>Share</span><Chevron w={9} h={5} color="#fff" />
        </ShareButton>
      </MenuBar>
      <RibbonBar />
      <Body>
        <ViewRail>
          <RailItem $active><svg width="14" height="15" fill="none" stroke="#000" strokeWidth="1.100"><path d="M.600 1v12.500H14M3 4.500h2v7H3zM7 6.500h2v5H7zM11 2h2v9.500h-2z" /></svg></RailItem>
          <RailItem><svg width="16" height="15" fill="none" stroke="#797775"><rect x=".500" y=".500" width="15" height="14" /><path d="M0 3.500h16M0 7h16M0 10.500h16M5.500 3v12M10.500 3v12" /></svg></RailItem>
          <RailItem><svg width="18" height="18" fill="none" stroke="#797775" strokeWidth="1.100"><path d="M.500 5.500h7v7h-7zM11 .500h6.500v6H11zM11 11h6.500v6H11zM.500 8H7.500M11 3h6M11 13.500h6M4 5.500V2.500h7M4 12.500v3h7" /></svg></RailItem>
          <RailItem><svg width="18" height="17" fill="none" stroke="#797775"><path d="M5 9V.500h6L15 4.500V13M11 .500v4h4M16.500 5v9l-2 1" /><text x="-.5" y="15.500" fontSize="6.500" fontWeight="700" fill="#797775" stroke="none">DAX</text></svg></RailItem>
        </ViewRail>
        <Center>
          <Stage>
            <ReportCanvas />
            <FilterPane>
              <DoubleChevron left />
              <svg width="12" height="12" fill="none" stroke="#252450" strokeWidth="1.100" style={{ marginTop: 16, marginLeft: 3 }}><path d="M11.500 .800v10.500L7 7.500H.800v-3H7z" /></svg>
              <VerticalText>Filters</VerticalText>
            </FilterPane>
          </Stage>
          <PageBar>
            <DeviceTools>
              <Device $w={43} $on><svg width="19" height="15" fill="none" stroke="#605e5c" strokeWidth="1.200"><path d="M.600 .600h17.800V11H.600zM7.500 11v3M11.500 11v3M5 14h9" /></svg></Device>
              <Device $w={46}><svg width="13" height="20" fill="none" stroke="#605e5c" strokeWidth="1.200"><rect x=".600" y=".600" width="11.800" height="18.800" rx="1" /><path d="M5.500 16.500h2" /></svg></Device>
              <svg width="28" height="8" fill="#c0bebc" style={{ marginLeft: 4 }}><path d="M5 0v8L1 4zM23 0v8l4-4z" /></svg>
            </DeviceTools>
            {[1, 2, 3, 4, 5].map((n) => <PageTab key={n} $on={n === 4}>Page {n}</PageTab>)}
            <AddPage><svg width="11" height="11" stroke="#fff" strokeWidth="2.800"><path d="M5.500 0v11M0 5.500h11" /></svg></AddPage>
          </PageBar>
        </Center>
        <Pane>
          <PaneHead><span>Build</span><Dots /><DoubleChevron /></PaneHead>
          <PaneLabel $mt={9}>Suggestions</PaneLabel>
          <IconGrid>{buildIcons.map((n) => <VisualIcon key={n} name={n} />)}</IconGrid>
          <PaneLabel $mt={9}>Data</PaneLabel>
          <DropZone><AddData>+Add data</AddData></DropZone>
        </Pane>
        <Pane>
          <PaneHead><span>Data</span><Dots /><DoubleChevron /></PaneHead>
          <FieldSearch><svg width="14" height="14" fill="none" stroke="#605e5c" strokeWidth="1.100"><circle cx="6" cy="6" r="5.300" /><path d="M9.800 9.800l4 4" /></svg>Search</FieldSearch>
          <FieldList>
            {tables.map((t) => (
              <FieldRow key={t}>
                <Chevron dir="right" w={6} h={12} color="#605e5c" sw={1} />
                <svg width="12" height="12" fill="none" stroke="#252423" strokeWidth="1.100"><rect x=".600" y=".600" width="10.800" height="10.800" rx="2" /><path d="M0 4h12M0 8h12M4 0v12M8 0v12" /></svg>
                {t}
              </FieldRow>
            ))}
          </FieldList>
        </Pane>
        <SideRail>
          <SideButton $on><svg width="14" height="18" fill="#fff" stroke={DARK}><path d="M.500 3v12c0 3.300 13 3.300 13 0V3" /><ellipse cx="7" cy="3" rx="6.500" ry="2.500" /></svg></SideButton>
          <SideButton $on><svg width="18" height="18" fill="none" stroke={DARK}><path d="M5.500 17.500V.500h4V17M5.500 6.500h-5v11H9M9.500 4.500h4v3" /><path d="M9.500 9v7.500c0 2 8 2 8 0V9" fill="#fff" stroke={ORANGE} /><ellipse cx="13.500" cy="9" rx="4" ry="1.500" fill="#fff" stroke={ORANGE} /></svg></SideButton>
          <SideButton><svg width="19" height="18" fill="none" stroke={DARK}><path d="M5.500 12V.500h5V9M5.500 5.500h-5v11h2M10.500 3.500h3v3" /><path d="M4 17c3 1 7 0 7-4l-3-2c-2 1-2 5-4 6z" fill={BFILL} stroke={BLUE} /><path d="M9 11l7.500-6.500c1.500-1 2.500.5 1.500 1.500L11 13z" fill="#fff" /></svg></SideButton>
          <SideButton style={{ height: 30 }}><svg width="18" height="18" stroke="#252423" strokeWidth="1.200"><path d="M9 0v18M0 9h18" /></svg></SideButton>
          <SettingsButton><svg width="20" height="20" fill="none" stroke={DARK} strokeWidth="1.300"><path d="M7.500 .700h5l.5 3 1.500.9 3-1.100 2 3.500-2.300 2v1.700l2.300 2-2 3.500-3-1.100-1.500.9-.5 3h-5l-.5-3-1.500-.9-3 1.100-2-3.500 2.300-2V9L.5 7l2-3.500 3 1.100 1.500-.9z" strokeLinejoin="round" /><circle cx="10" cy="9.900" r="3" /></svg></SettingsButton>
        </SideRail>
      </Body>
      <StatusBar>
        <span>Page 4 of 5</span>
        <Zoom>
          <svg width="124" height="12" fill="none" stroke="#605e5c"><path d="M-1 6.500h4" strokeWidth="1.500" /><path d="M7 6.500h100" /><path d="M40 1v10" strokeWidth="4" stroke="#484644" /><path d="M57.500 4v5M117 2.500v8M113 6.500h8" /></svg>
          <span style={{ marginLeft: 5, marginRight: 14 }}>69%</span>
          <svg width="17" height="12" fill="none" stroke="#605e5c"><rect x=".500" y=".500" width="16" height="11" stroke="#5f5f70" /><path d="M3 5V3h2M12 3h2v2M14 7v2h-2M5 9H3V7" stroke={GREEN} /></svg>
        </Zoom>
      </StatusBar>
      <Taskbar>
        <Start><svg width="16" height="16" fill="#fff"><path d="M0 2.300l7-1v6.400H0zM8 1.100L16 0v7.700H8zM0 8.500h7v6.300l-7-1zM8 8.500h8V16l-8-1.100z" /></svg></Start>
        <TaskSearch><Magnifier size={16} color="#e0e0e0" />Type here to search</TaskSearch>
        <TaskView><svg width="16" height="16" fill="none" stroke="#fff"><path d="M.500 4.500h10v7H.500zM.500 0v2.500h10V0M.500 16v-2.500h10V16M14.500 0v3M14.500 8v8" /><path d="M13 4h3v3h-3z" fill="#fff" stroke="none" /></svg></TaskView>
        <TaskApp><svg width="21" height="18"><path d="M0 0h8l2 2h11v15H0z" fill="#f0a51e" /><path d="M0 4h21v13H0z" fill="#fcd462" /><path d="M4 17v-6q0-1 1-1h11q1 0 1 1v6h-4v-3H8v3z" fill="#3794e0" /></svg></TaskApp>
        <TaskApp><svg width="24" height="24">
          <defs><linearGradient id="edA" x1="0" y1="0" x2="1" y2=".4"><stop offset="0" stopColor="#2fa6e0" /><stop offset="1" stopColor="#64dc70" /></linearGradient></defs>
          <circle cx="12" cy="12" r="12" fill="#0c59a4" /><path d="M0 12C0 4 6 0 12 0c7 0 12 5 12 10 0 4-3 6-6 6s-4-1-4-2 1-1.500 1-3.500C15 8 12 6 9 6 4 6 0 9 0 12z" fill="url(#edA)" /><path d="M0 12c0-4 4-6.500 9-5.500-3 2-4 5-3 9 1 4 4 7 8 8C6 25 0 19 0 12z" fill="#1780d6" /><path d="M11.500 12c-1 5 4 8.500 11 6l1.500-2v-3c-1 2-3 3-6 3s-4-1-4-2 1-1.500 1-3c-1.500 0-3 0-3.500 1z" fill="#2d2420" /></svg></TaskApp>
        <TaskApp><svg width="23" height="24"><path d="M6 5V1h11v4" fill="none" stroke="#2aa7e8" strokeWidth="2" /><path d="M0 5h23v16q0 2-2 2H2q-2 0-2-2z" fill="#f2f2f2" /><path d="M7 9h4v4H7z" fill="#f25022" /><path d="M12 9h4v4h-4z" fill="#7fba00" /><path d="M7 14h4v4H7z" fill="#00a4ef" /><path d="M12 14h4v4h-4z" fill="#ffb900" /></svg></TaskApp>
        <TaskApp><svg width="24" height="23"><path d="M0 8l12-8 12 8v3H0z" fill="#0c6abf" /><path d="M2 8h20v10H2z" fill="#eef6fc" /><path d="M0 8l12 8.500L24 8v14H0z" fill="#2b9be8" /><path d="M0 22L24 8v14z" fill="#1683d8" /><path d="M2 8.500h20l-10 8z" fill="#eef6fc" /></svg></TaskApp>
        <TaskApp><svg width="23" height="24"><path d="M3 5c0-2 1-3 2-4 0 2 1 3 3 3 2 0 2-2 6-4 0 2 1 3 4 5 4 3 5 6 5 9 0 6-5 10-11.500 10S0 19 0 13c0-3 1-6 3-8z" fill="#fc7a26" /><path d="M14 0c0 2 1 3 4 5 4 3 5 8 4 11 0-5-5-8-9-9 0-3 0-5 1-7z" fill="#fed83a" /><circle cx="12" cy="13.500" r="5.500" fill="#8a4be8" /><path d="M2 9c4-2 7 0 10 1-2 1-4 2-5 4-3 0-5-2-5-5z" fill="#fda32b" /><path d="M0 14c2 5 7 8 13 7-3 3-12 2-13-7z" fill="#f33b5c" /></svg></TaskApp>
        <TaskApp><svg width="24" height="24"><circle cx="12" cy="12" r="12" fill="#fbc116" /><path d="M1.600 6A12 12 0 0 1 22.400 6H12a6 6 0 0 0-5.500 8.500z" fill="#e33b2e" /><path d="M1.600 6A12 12 0 0 0 11 24l5.500-9a6 6 0 0 1-9.700 0z" fill="#28a148" /><circle cx="12" cy="12" r="5.800" fill="#fff" /><circle cx="12" cy="12" r="4.500" fill="#3b7ded" /></svg></TaskApp>
        <TaskApp $on><svg width="19" height="24"><path d="M9 1q0-1 1-1h8q1 0 1 1v22q0 1-1 1H9z" fill="#d9a013" /><path d="M5 7q0-1 1-1h7q1 0 1 1v17H5z" fill="#f0c22f" /><path d="M0 13q0-1 1-1h7q1 0 1 1v11H1q-1 0-1-1z" fill="#f7dc62" /></svg></TaskApp>
        <Tray>
          <Weather><svg width="24" height="16" fill="none" stroke="#fff" strokeWidth="1.300"><path d="M20 .700H.700v14.600h20c3 0 2.600-2 2.600-2V3.500H20v11M3 4.500h14M3 7.500h6v5H3zM11 8h6M11 10.500h6M11 13h6" /></svg><span>30°C</span><span>Sunny</span></Weather>
          <TrayIcon style={{ width: 26 }}><Chevron dir="up" w={11} h={6} color="#fff" /></TrayIcon>
          <TrayIcon><svg width="12" height="16" fill="none" stroke="#fff"><path d="M1 4h7v8H1zM8 7l3-2v6l-3-2M3 1c2-1 5-1 7 0M3 15c2 1 5 1 7 0" /></svg></TrayIcon>
          <TrayIcon><svg width="15" height="12" fill="none" stroke="#fff"><path d="M5 2.500h8.500v7H5M14.500 4v4M1 3h3v2c0 2-3 2-3 0zM1.500 1v2M3.500 1v2M2.500 6v4H6" /><path d="M6 4h6v4H6z" fill="#fff" stroke="none" /></svg></TrayIcon>
          <TrayIcon><svg width="16" height="14" fill="none" stroke="#fff"><path d="M.500 5h2.500l3.500-3.500v11L3 9.500H.500zM9 5q1.500 2 0 4.500M11 3q3 4 0 8M13 1q4.500 6 0 12" /></svg></TrayIcon>
          <TrayIcon><svg width="16" height="16" fill="none" stroke="#fff"><circle cx="7.500" cy="7.500" r="7" /><ellipse cx="7.500" cy="7.500" rx="3" ry="7" /><path d="M.500 5h14M.500 10h8" /><circle cx="12" cy="12" r="3.500" fill="#3a2b28" /><path d="M9.500 9.500l5 5" /></svg></TrayIcon>
          <Clock>1:55 PM<br />10/29/2024</Clock>
          <TrayIcon style={{ width: 40 }}><svg width="16" height="16" fill="none" stroke="#fff" strokeWidth="1.100"><path d="M.600 .600h14.800v11.900h-4.900l-2.500 2.500-2.500-2.500H.600z" /></svg></TrayIcon>
          <TrayIcon style={{ width: 13, paddingLeft: 8 }}><svg width="1" height="40"><path d="M0 0h1v40H0z" fill="#86807d" /></svg></TrayIcon>
        </Tray>
      </Taskbar>
    </Window>
  );
}
